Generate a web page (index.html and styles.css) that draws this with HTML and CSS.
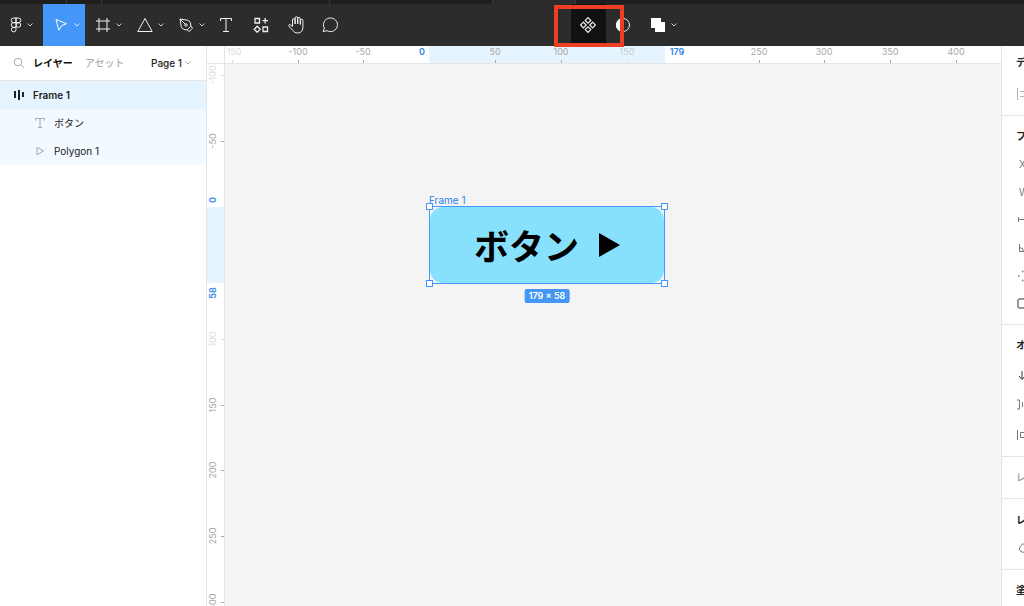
FILE: index.html
```html
<!DOCTYPE html>
<html lang="ja">
<head>
<meta charset="utf-8">
<title>Frame 1</title>
<link rel="stylesheet" href="styles.css">
</head>
<body>
<div class="app">
  <div class="tabstrip">
    <span class="tab tab-menu"></span><span class="tab tab-home"></span><span class="tab tab-file"></span><span class="tab tab-wide"></span><span class="tab tab-active"></span>
  </div>
  <header class="toolbar">
    <div class="tools">
      <button class="tool tool-menu" aria-label="メニュー">
        <svg width="12" height="16" viewBox="0 0 12 16"><path d="M6 1H3.500a2.300 2.300 0 0 0 0 4.700H6zM6 1h2.500a2.300 2.300 0 0 1 0 4.700H6zM6 5.700H3.500a2.300 2.300 0 0 0 0 4.600H6zM3.500 10.300A2.300 2.300 0 1 0 6 12.700v-2.400z"/><circle cx="8.400" cy="8" r="2.300"/></svg>
        <svg class="chev" width="8" height="6" viewBox="0 0 8 6"><path d="M1.500 1.500 4 4l2.500-2.500"/></svg>
      </button>
      <button class="tool tool-drop selected" aria-label="移動">
        <svg width="16" height="16" viewBox="0 0 16 16"><path d="M3 2.500 13.500 6.700 8.700 8.600 5.800 13.200z"/></svg>
        <svg class="chev" width="8" height="6" viewBox="0 0 8 6"><path d="M1.500 1.500 4 4l2.500-2.500"/></svg>
      </button>
      <button class="tool tool-drop" aria-label="フレーム">
        <svg width="16" height="16" viewBox="0 0 16 16"><path d="M4 1v14M12 1v14M1 4h14M1 12h14"/></svg>
        <svg class="chev" width="8" height="6" viewBox="0 0 8 6"><path d="M1.500 1.500 4 4l2.500-2.500"/></svg>
      </button>
      <button class="tool tool-drop" aria-label="図形">
        <svg width="16" height="16" viewBox="0 0 16 16"><path d="M8 1.500 15.200 14.500H.8z"/></svg>
        <svg class="chev" width="8" height="6" viewBox="0 0 8 6"><path d="M1.500 1.500 4 4l2.500-2.500"/></svg>
      </button>
      <button class="tool tool-pen" aria-label="ペン">
        <svg width="16" height="16" viewBox="0 0 16 16"><path d="M2 2l7.500 1.200c2.500.8 3.500 3 3.300 5.800l1.700 2.300-3.200 3.200L9 12.800c-2.800.2-5-.8-5.800-3.300zM2 2l5 5M9.300 12.700l3.500-3.500"/><circle cx="8" cy="8" r="1.200"/></svg>
        <svg class="chev" width="8" height="6" viewBox="0 0 8 6"><path d="M1.500 1.500 4 4l2.500-2.500"/></svg>
      </button>
      <button class="tool tool-single" aria-label="テキスト">
        <svg width="16" height="16" viewBox="0 0 16 16"><path d="M2.500 4V1.500h11V4M8 1.500v13M5 14.500h6"/></svg>
      </button>
      <button class="tool tool-resources" aria-label="リソース">
        <svg width="16" height="16" viewBox="0 0 16 16"><path stroke-width="1.300" d="M2 1.500h4.500V6H2zM10 10h4.500v4.500H10zM4.200 9.200 7.200 12.200l-3 3-3-3zM12.200 1v5.500M9.500 3.700H15"/></svg>
      </button>
      <button class="tool tool-single" aria-label="手のひら">
        <svg width="18" height="18" viewBox="0 0 18 18"><path d="M5.500 10.500V4a1.300 1.300 0 0 1 2.600 0v4V2a1.300 1.300 0 0 1 2.600 0v6V2.800a1.300 1.300 0 0 1 2.600 0V8.500V4.500a1.300 1.300 0 0 1 2.600 0v7c0 3.500-2.200 5.500-5 5.500-2.700 0-4-1-5-2.700L2 10.500c-1-1.500.7-2.600 1.800-1.500l1.700 1.800"/></svg>
      </button>
      <button class="tool tool-single" aria-label="コメント">
        <svg width="16" height="16" viewBox="0 0 16 16"><path d="M1.200 14.500 2.300 11A7 6.800 0 1 1 5 13.700z"/></svg>
      </button>
    </div>
    <div class="object-tools">
      <button class="tool tool-component" aria-label="コンポーネントの作成">
        <svg width="16" height="16" viewBox="0 0 16 16"><path stroke-width="1.200" d="M8 .6 10.800 3.400 8 6.200 5.200 3.400zM8 9.800l2.800 2.800L8 15.400l-2.800-2.800zM3.400 5.200 6.200 8l-2.800 2.800L.6 8zM12.600 5.200 15.400 8l-2.800 2.800L9.800 8z"/></svg>
      </button>
      <button class="tool tool-single" aria-label="マスク">
        <svg width="16" height="16" viewBox="0 0 16 16"><circle cx="8" cy="8" r="6.500"/><path class="solid" d="M8 1a7 7 0 0 0 0 14z"/></svg>
      </button>
      <button class="tool tool-drop" aria-label="選択範囲の結合">
        <svg width="16" height="16" viewBox="0 0 16 16"><path class="solid" d="M1 1h10v4h4v10H5v-4H1z"/></svg>
        <svg class="chev" width="8" height="6" viewBox="0 0 8 6"><path d="M1.500 1.500 4 4l2.500-2.500"/></svg>
      </button>
      <span class="callout"></span>
    </div>
  </header>

  <main class="workspace">
    <aside class="layers">
      <div class="layers-head">
        <svg class="search" width="12" height="12" viewBox="0 0 12 12"><circle cx="5" cy="5" r="3.800"/><path d="m8 8 3.300 3.300"/></svg>
        <button class="panel-tab current">レイヤー</button>
        <button class="panel-tab">アセット</button>
        <button class="page-menu">Page 1
          <svg width="8" height="6" viewBox="0 0 8 6"><path d="M1.500 1.500 4 4l2.500-2.500"/></svg>
        </button>
      </div>
      <ul class="tree">
        <li class="row row-frame"><svg class="dark" width="10" height="10" viewBox="0 0 10 10"><path d="M1 1v7M5 0v10M9 2v5"/></svg>Frame 1</li>
        <li class="row row-child"><svg width="10" height="10" viewBox="0 0 10 10"><path d="M.5 2.500V.5h9v2M5 .5v9M3 9.500h4"/></svg>ボタン</li>
        <li class="row row-child"><svg width="10" height="10" viewBox="0 0 10 10"><path d="M2 1.200 8.500 5 2 8.800z"/></svg>Polygon 1</li>
      </ul>
    </aside>

    <section class="stage">
      <div class="corner"></div>
      <svg class="ruler ruler-x">
        <rect class="span" x="204" y="0" width="236" height="17"/>
        <path class="tick" d="M73.500 14v3M138.500 14v3M270.500 14v3M336.500 14v3M534.500 14v3M599.500 14v3M665.500 14v3M731.500 14v3"/>
        <path class="tick faint" d="M7.500 14v3M402.500 14v3"/>
        <g>
          <text class="faint" x="7" y="9">-150</text><text x="73" y="9">-100</text><text x="138" y="9">-50</text>
          <text class="edge" x="197" y="9">0</text>
          <text x="270" y="9">50</text><text x="336" y="9">100</text><text class="pale" x="402" y="9">150</text>
          <text class="edge" x="452" y="9">179</text>
          <text x="534" y="9">250</text><text x="599" y="9">300</text><text x="665" y="9">350</text><text x="731" y="9">400</text>
        </g>
      </svg>
      <svg class="ruler ruler-y">
        <rect class="span" x="0" y="143" width="17" height="76"/>
        <path class="tick" d="M14 77.500h3M14 341.500h3M14 406.500h3M14 472.500h3M14 538.500h3"/>
        <path class="tick faint" d="M14 11.500h3M14 275.500h3"/>
        <g transform="rotate(-90)">
          <text class="faint" x="-11" y="9">-100</text><text x="-77" y="9">-50</text>
          <text class="edge" x="-136" y="9">0</text><text class="edge" x="-229" y="9">58</text>
          <text class="faint" x="-275" y="9">100</text><text x="-341" y="9">150</text><text x="-406" y="9">200</text><text x="-472" y="9">250</text><text x="-538" y="9">300</text>
        </g>
      </svg>
      <div class="canvas">
        <div class="node">
          <span class="node-name">Frame 1</span>
          <div class="node-box">
            <span class="node-text">ボタン</span>
            <svg width="21" height="24" viewBox="0 0 21 24"><path d="M0 0 21 12 0 24z"/></svg>
          </div>
          <i class="handle nw"></i><i class="handle ne"></i><i class="handle sw"></i><i class="handle se"></i>
          <span class="node-size">179 × 58</span>
        </div>
      </div>
    </section>

    <aside class="props">
      <section class="group">
        <h2 class="line line-tall">デ</h2>
        <div class="line line-tall"><svg class="light" width="16" height="14" viewBox="0 0 16 14"><path d="M1.500 1v12M4 4.500h10M4 9.500h10"/></svg></div>
      </section>
      <section class="group">
        <h2 class="line">フ</h2>
        <div class="line inset">X</div>
        <div class="line inset">W</div>
        <div class="line"><svg width="16" height="12" viewBox="0 0 16 12"><path d="M2.500 3v5M2.500 5.500H14"/></svg></div>
        <div class="line"><svg width="16" height="12" viewBox="0 0 16 12"><path d="M3.500 2v7.500H12M3.500 5.500a4 4 0 0 1 4 4"/></svg></div>
        <div class="line"><svg width="16" height="12" viewBox="0 0 16 12"><path stroke-width="1.500" d="M2 6h1.500M6 1.500h1.500M6 10.500h1.500"/></svg></div>
        <div class="line"><svg class="dark" width="16" height="12" viewBox="0 0 16 12"><rect x="2" y="1" width="12" height="9" rx="1"/></svg></div>
      </section>
      <section class="group">
        <h2 class="line">オ</h2>
        <div class="line line-tall"><svg class="dark" width="16" height="12" viewBox="0 0 16 12"><path d="M6 2v8M3 7l3 3.500L9 7"/></svg></div>
        <div class="line"><svg width="16" height="12" viewBox="0 0 16 12"><path d="M1 1h2.500v9H1M6.500 3v5"/></svg></div>
        <div class="line line-tall"><svg width="16" height="12" viewBox="0 0 16 12"><path d="M1.500 1v10M4.500 3.500h6v5h-6z"/></svg></div>
      </section>
      <section class="group group-roomy">
        <div class="line">レ</div>
      </section>
      <section class="group group-roomy">
        <h2 class="line">レ</h2>
        <div class="line"><svg width="16" height="12" viewBox="0 0 16 12"><path d="M7 1.500 4.300 4.500a3.500 3.500 0 1 0 5.400 0z"/></svg></div>
      </section>
      <section class="group">
        <h2 class="line">塗</h2>
      </section>
    </aside>
  </main>
</div>
</body>
</html>
```
FILE: styles.css
```css
* { box-sizing: border-box; }

body {
  margin: 0;
  font-family: Inter, "Noto Sans CJK JP", sans-serif;
  font-size: 10px;
  line-height: 14px;
  color: #222;
}

button {
  padding: 0;
  border: 0;
  background: none;
  font: inherit;
  color: inherit;
}

svg {
  display: block;
  flex: none;
  fill: none;
  stroke: currentColor;
}

.app {
  display: flex;
  flex-direction: column;
  height: 100vh;
  overflow: hidden;
}

.tabstrip {
  display: flex;
  flex: none;
  height: 4px;
  background: #1e1e1e;
}
.tab { border-right: 1px solid #3a3a3a; }
.tab-menu { width: 67px; }
.tab-home { width: 35px; }
.tab-file { width: 228px; }
.tab-wide { width: 163px; }
.tab-active { width: 83px; background: #2c2c2c; }

.toolbar {
  display: flex;
  flex: none;
  height: 42px;
  background: #2c2c2c;
  color: #f0f0f0;
}
.tools { display: flex; }
.object-tools {
  position: relative;
  display: flex;
  flex: 1;
  justify-content: center;
  padding-right: 119px;
}
.tool {
  display: flex;
  align-items: center;
  justify-content: center;
  gap: 4px;
  width: 34px;
}
.tool-menu { width: 43px; }
.tool-drop { width: 42px; padding-left: 6px; }
.tool-pen { width: 40px; padding-left: 6px; }
.tool-resources { width: 36px; }
.tool-component { width: 35px; background: #111; }
.tool.selected { background: #4597f7; color: #fff; }
.chev { opacity: 0.8; }
.solid { fill: #fff; stroke: none; }
.callout {
  position: absolute;
  top: 1px;
  left: calc(50% - 132px);
  width: 70px;
  height: 42px;
  border: 4px solid #ed3f23;
  z-index: 2;
}

.workspace {
  display: grid;
  grid-template-columns: 207px 1fr 23px;
  flex: 1;
  min-height: 0;
}

.layers {
  border-right: 1px solid #e5e5e5;
  background: #fff;
}
.layers-head {
  display: flex;
  align-items: center;
  height: 35px;
  padding: 0 14px 0 13px;
  border-bottom: 1px solid #e5e5e5;
}
.search { color: #aaa; }
.panel-tab { margin-left: 12px; color: #999; }
.panel-tab.current { margin-left: 8px; color: #111; font-weight: 700; }
.page-menu {
  display: flex;
  align-items: center;
  gap: 2px;
  margin-left: auto;
  font-weight: 500;
}
.page-menu svg { color: #aaa; }
.tree { margin: 0; padding: 0; list-style: none; }
.row {
  display: flex;
  align-items: center;
  height: 28px;
  gap: 9px;
  padding-left: 14px;
}
.row svg { color: #aaa; }
.row svg.dark { color: #222; stroke-width: 2; }
.row-frame { background: #e5f4ff; font-weight: 600; }
.row-child { padding-left: 35px; background: #f2f9ff; }

.stage {
  display: grid;
  grid-template: 18px 1fr / 18px 1fr;
  min-width: 0;
  min-height: 0;
  background: #fff;
}
.corner { border: solid #e5e5e5; border-width: 0 1px 1px 0; }
.ruler {
  width: 100%;
  height: 100%;
  min-width: 0;
  min-height: 0;
  overflow: hidden;
  color: #a8a8a8;
  font-size: 9px;
}
.ruler-x { border-bottom: 1px solid #e5e5e5; }
.ruler-y { border-right: 1px solid #e5e5e5; }
.ruler text { fill: #a8a8a8; stroke: none; text-anchor: middle; }
.ruler text.edge { fill: #2f7fe8; font-weight: 600; }
.ruler text.pale { fill: #c4ced6; }
.ruler text.faint { fill: #dedede; }
.tick.faint { stroke: #dedede; }
.span { fill: #e5f4ff; stroke: none; }

.canvas {
  position: relative;
  overflow: hidden;
  background: #f4f4f4;
}
.node {
  position: absolute;
  top: 142px;
  left: 204px;
  border: 1px solid #4597f7;
}
.node-box {
  display: flex;
  align-items: center;
  gap: 20px;
  padding: 11px 44px 12px 44px;
  border-radius: 13px;
  background: #87e0fc;
}
.node-box svg { fill: #000; stroke: none; }
.node-text {
  font-family: "Noto Sans CJK JP", sans-serif;
  font-size: 35px;
  font-weight: 700;
  line-height: 53px;
  color: #000;
}
.node-name {
  position: absolute;
  bottom: 100%;
  left: -1px;
  line-height: 14px;
  color: #2f7fe8;
}
.node-size {
  position: absolute;
  top: calc(100% + 6px);
  left: 50%;
  padding: 0 4px;
  border-radius: 2px;
  background: #4597f7;
  color: #fff;
  font-size: 9px;
  font-weight: 600;
  white-space: nowrap;
  transform: translateX(-50%);
}
.handle {
  position: absolute;
  width: 7px;
  height: 7px;
  border: 1px solid #4597f7;
  background: #fff;
}
.nw { top: -4px; left: -4px; }
.ne { top: -4px; right: -4px; }
.sw { bottom: -4px; left: -4px; }
.se { bottom: -4px; right: -4px; }

.props {
  overflow: hidden;
  border-left: 1px solid #e5e5e5;
  background: #fff;
  white-space: nowrap;
}
.group { padding: 6px 0; border-bottom: 1px solid #e5e5e5; }
.group:first-child { padding: 0 0 5px; }
.group:nth-child(3) { padding-bottom: 5px; }
.group-roomy { padding: 7px 0; }
.group:nth-child(4) { padding-top: 6px; }
.line {
  display: flex;
  align-items: center;
  height: 28px;
  margin: 0;
  padding-left: 14px;
  font-size: 10px;
  font-weight: 400;
  color: #777;
}
h2.line { color: #222; font-weight: 700; }
.line-tall { height: 32px; }
.inset { padding-left: 17px; }
.line .dark { color: #333; }
.line .light { color: #b3b3b3; }
```
